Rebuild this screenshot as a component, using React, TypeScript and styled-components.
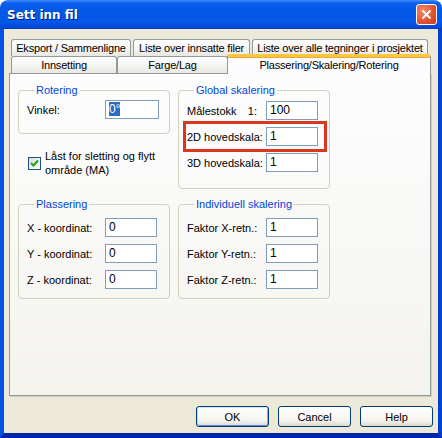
import React from "react";
import styled, { createGlobalStyle, css } from "styled-components";

const GlobalStyle = createGlobalStyle`
  html, body {
    margin: 0;
    padding: 0;
    background: #ffffff;
  }
  body {
    font-family: "Liberation Sans", Arial, sans-serif;
    font-size: 11px;
    color: #000;
  }
  * {
    box-sizing: border-box;
  }
`;

const Window = styled.div`
  width: 442px;
  height: 438px;
  display: flex;
  flex-direction: column;
  border-radius: 8px 8px 0 0;
  overflow: hidden;
`;

const TitleBar = styled.div`
  height: 29px;
  flex: none;
  display: flex;
  align-items: center;
  justify-content: space-between;
  padding: 0 5px 0 7px;
  background: linear-gradient(
    180deg,
    #3d8ff7 0px,
    #0b5eec 3px,
    #0357e7 12px,
    #0558e9 22px,
    #014ad7 27px,
    #003dc2 29px
  );
`;

const Title = styled.div`
  color: #ffffff;
  font-family: "DejaVu Sans", "Liberation Sans", sans-serif;
  font-weight: bold;
  font-size: 12px;
  text-shadow: 1px 1px 0 #0a1883;
  padding-top: 1px;
`;

const CloseButton = styled.div`
  width: 21px;
  height: 21px;
  border: 1px solid #ffffff;
  border-radius: 3px;
  background: radial-gradient(circle at 30% 30%, #f08a6c, #e0512f 60%, #c43a1c);
  display: flex;
  align-items: center;
  justify-content: center;
`;

const Body = styled.div`
  flex: 1;
  display: flex;
  flex-direction: column;
  background: #ece9d8;
  border-left: 4px solid #0452e4;
  border-right: 4px solid #0040cf;
  border-bottom: 5px solid #0027a8;
  padding: 10px 0 6px 5px;
`;

const TabStrip = styled.div`
  display: flex;
  flex-direction: column;
  padding-left: 2px;
`;

const TabRow = styled.div<{ $gap: number }>`
  display: flex;
  gap: ${({ $gap }) => $gap}px;
  height: 17px;
`;

const Tab = styled.div<{ $w: number; $active?: boolean }>`
  width: ${({ $w }) => $w}px;
  height: 17px;
  display: flex;
  align-items: center;
  justify-content: center;
  white-space: nowrap;
  letter-spacing: -0.2px;
  border: 1px solid #919b9c;
  border-bottom: none;
  border-radius: 3px 3px 0 0;
  background: linear-gradient(#ffffff, #f3f3ef 60%, #e8e7e0);
  ${({ $active, $w }) =>
    $active &&
    css`
      position: relative;
      z-index: 1;
      height: 20px;
      margin-top: -2px;
      margin-left: -1px;
      width: ${$w + 2}px;
      background: #fcfcfe;
      border-top: 3px solid #ffc83c;
      box-shadow: inset 0 1px 0 #f0a63a;
      padding-bottom: 1px;
    `}
`;

const Panel = styled.div`
  width: 422px;
  height: 323px;
  border: 1px solid #919b9c;
  box-shadow: 1px 1px 0 #d0cebf;
  background: linear-gradient(#fdfdfe, #f4f3ee);
  padding: 10px 0 0 8px;
  display: grid;
  grid-template-columns: 152px 152px;
  grid-template-rows: auto auto;
  align-content: start;
  column-gap: 8px;
  row-gap: 9px;
  align-items: start;
`;

const Column = styled.div`
  display: flex;
  flex-direction: column;
`;

const Group = styled.fieldset<{ $pt: number; $pb: number }>`
  margin: 0;
  border: 1px solid #d0d0bf;
  border-radius: 4px;
  padding: ${({ $pt, $pb }) => `${$pt}px 0 ${$pb}px 8px`};
  display: flex;
  flex-direction: column;
  gap: 7px;
`;

const Legend = styled.legend`
  color: #0046d5;
  font-size: 11px;
  line-height: 13px;
  padding: 0 2px;
  margin-left: 7px;
`;

const Row = styled.div<{ $mark?: boolean }>`
  display: flex;
  align-items: center;
  height: 19px;
  position: relative;
  width: fit-content;
  ${({ $mark }) =>
    $mark &&
    css`
      &::after {
        content: "";
        position: absolute;
        left: -4px;
        right: -9px;
        top: -6px;
        bottom: -6px;
        border: 3px solid #d9381e;
      }
    `}
`;

const Label = styled.div<{ $w: number }>`
  width: ${({ $w }) => $w}px;
  display: flex;
  justify-content: space-between;
  padding-right: 9px;
  white-space: nowrap;
`;

const Field = styled.div<{ $w: number }>`
  width: ${({ $w }) => $w}px;
  height: 19px;
  border: 1px solid #7f9db9;
  background: #ffffff;
  padding-left: 3px;
  line-height: 17px;
  font-size: 12px;
`;

const Selected = styled.span`
  background: #316ac5;
  color: #ffffff;
`;

const CheckRow = styled.div`
  display: flex;
  align-items: center;
  gap: 4px;
  margin: 15px 0 0 10px;
  line-height: 14px;
`;

const CheckBox = styled.div`
  width: 13px;
  height: 13px;
  flex: none;
  border: 1px solid #1c5180;
  background: linear-gradient(135deg, #dcdcd7, #ffffff);
  display: flex;
  align-items: center;
  justify-content: center;
`;

const ButtonRow = styled.div`
  display: flex;
  justify-content: flex-end;
  gap: 9px;
  margin-top: 10px;
  padding-right: 5px;
`;

const Button = styled.div<{ $default?: boolean }>`
  width: 73px;
  height: 21px;
  border: 1px solid #003c74;
  border-radius: 3px;
  background: linear-gradient(#ffffff, #f5f4ef 70%, #dcd8cc);
  display: flex;
  align-items: center;
  justify-content: center;
  ${({ $default }) =>
    $default &&
    css`
      box-shadow: inset 0 1px 0 #cee7ff, inset 1px 0 0 #bcd4f6,
        inset -1px 0 0 #89adec, inset 0 -1px 0 #6982ee;
    `}
`;

const rows1 = [
  { label: "Eksport / Sammenligne", w: 120 },
  { label: "Liste over innsatte filer", w: 117 },
  { label: "Liste over alle tegninger i prosjektet", w: 176 },
];

const rows2 = [
  { label: "Innsetting", w: 106 },
  { label: "Farge/Lag", w: 111 },
  { label: "Plassering/Skalering/Rotering", w: 202, active: true },
];

export default function App() {
  return (
    <>
      <GlobalStyle />
      <Window>
        <TitleBar>
          <Title>Sett inn fil</Title>
          <CloseButton>
            <svg width="11" height="11" viewBox="0 0 11 11">
              <path d="M1.5 1.5 L9.5 9.5 M9.5 1.5 L1.5 9.5" stroke="#fff" strokeWidth="2" />
            </svg>
          </CloseButton>
        </TitleBar>
        <Body>
          <TabStrip>
            <TabRow $gap={2}>
              {rows1.map((t) => (
                <Tab key={t.label} $w={t.w}>
                  {t.label}
                </Tab>
              ))}
            </TabRow>
            <TabRow $gap={0}>
              {rows2.map((t) => (
                <Tab key={t.label} $w={t.w} $active={t.active}>
                  {t.label}
                </Tab>
              ))}
            </TabRow>
          </TabStrip>
          <Panel>
            <Column>
              <Group $pt={3} $pb={14}>
                <Legend>Rotering</Legend>
                <Row>
                  <Label $w={78}>Vinkel:</Label>
                  <Field $w={54}>
                    <Selected>0°</Selected>
                  </Field>
                </Row>
              </Group>
              <CheckRow>
                <CheckBox>
                  <svg width="9" height="9" viewBox="0 0 9 9">
                    <path d="M1 4 L3.5 6.5 L8 1.5" stroke="#21a121" strokeWidth="2" fill="none" />
                  </svg>
                </CheckBox>
                <div>
                  Låst for sletting og flytt
                  <br />
                  område (MA)
                </div>
              </CheckRow>
            </Column>
            <Group $pt={4} $pb={16}>
              <Legend>Global skalering</Legend>
              <Row>
                <Label $w={79}>
                  <span>Målestokk</span>
                  <span>1:</span>
                </Label>
                <Field $w={52}>100</Field>
              </Row>
              <Row $mark>
                <Label $w={79}>2D hovedskala:</Label>
                <Field $w={52}>1</Field>
              </Row>
              <Row>
                <Label $w={79}>3D hovedskala:</Label>
                <Field $w={52}>1</Field>
              </Row>
            </Group>
            <Group $pt={7} $pb={9}>
              <Legend>Plassering</Legend>
              <Row>
                <Label $w={78}>X - koordinat:</Label>
                <Field $w={52}>0</Field>
              </Row>
              <Row>
                <Label $w={78}>Y - koordinat:</Label>
                <Field $w={52}>0</Field>
              </Row>
              <Row>
                <Label $w={78}>Z - koordinat:</Label>
                <Field $w={52}>0</Field>
              </Row>
            </Group>
            <Group $pt={7} $pb={9}>
              <Legend>Individuell skalering</Legend>
              <Row>
                <Label $w={79}>Faktor X-retn.:</Label>
                <Field $w={52}>1</Field>
              </Row>
              <Row>
                <Label $w={79}>Faktor Y-retn.:</Label>
                <Field $w={52}>1</Field>
              </Row>
              <Row>
                <Label $w={79}>Faktor Z-retn.:</Label>
                <Field $w={52}>1</Field>
              </Row>
            </Group>
          </Panel>
          <ButtonRow>
            <Button $default>OK</Button>
            <Button>Cancel</Button>
            <Button>Help</Button>
          </ButtonRow>
        </Body>
      </Window>
    </>
  );
}
